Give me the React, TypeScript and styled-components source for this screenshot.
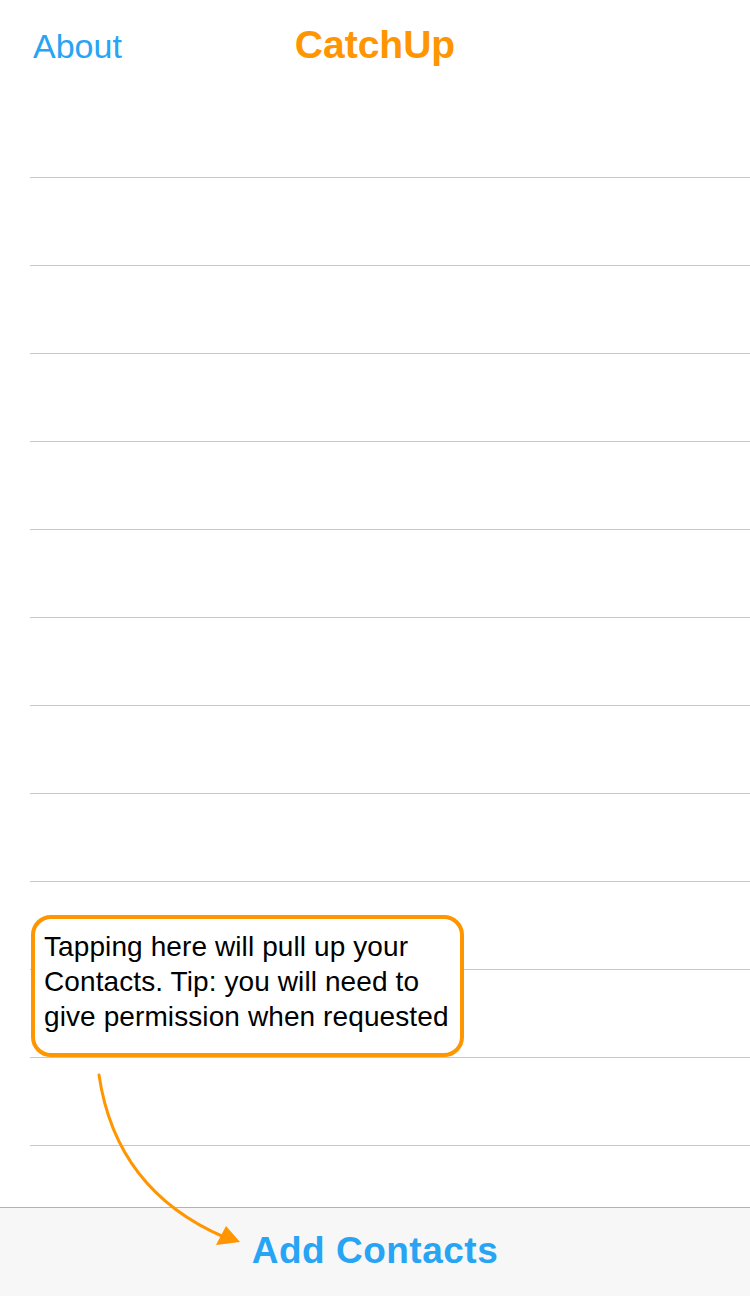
import React from 'react'
import styled, {createGlobalStyle} from 'styled-components'

const ROWS = 13

function App() {
    return (
        <>
            <GlobalStyle/>
            <Screen>
                <NavBar>
                    <NavButton>About</NavButton>
                    <Title>CatchUp</Title>
                    <span/>
                </NavBar>
                <List>
                    {Array.from({length: ROWS}).map((_, i) => (
                        <Row key={i}/>
                    ))}
                </List>
                <TipBox>
                    Tapping here will pull up your Contacts. Tip: you will need to give permission when requested
                </TipBox>
                <Arrow width="750" height="1296" viewBox="0 0 750 1296">
                    <path d="M99 1075 C 110 1150, 150 1205, 224 1237" fill="none" stroke="#ff9500" strokeWidth="3" strokeLinecap="round"/>
                    <polygon points="240,1242 216,1245 226,1226" fill="#ff9500"/>
                </Arrow>
                <Toolbar>
                    <AddButton>Add Contacts</AddButton>
                </Toolbar>
            </Screen>
        </>
    )
}

const GlobalStyle = createGlobalStyle`
  html, body {
    margin: 0;
    padding: 0;
    background: #fff;
  }
  body {
    font-family: 'Liberation Sans', Arial, sans-serif;
  }
`

const Screen = styled.div`
  position: relative;
  display: flex;
  flex-direction: column;
  width: 750px;
  height: 1296px;
  overflow: hidden;
  background: #fff;
`

const NavBar = styled.header`
  box-sizing: border-box;
  height: 90px;
  padding-top: 25px;
  display: grid;
  grid-template-columns: 1fr auto 1fr;
  align-items: baseline;
  flex-shrink: 0;
`

const NavButton = styled.span`
  padding-left: 33px;
  font-size: 34px;
  line-height: 1;
  color: #27a4f4;
`

const Title = styled.h1`
  margin: 0;
  font-size: 39px;
  line-height: 1;
  font-weight: bold;
  color: #ff9500;
`

const List = styled.div`
  flex: 1;
  overflow: hidden;
`

const Row = styled.div`
  box-sizing: border-box;
  height: 88px;
  margin-left: 30px;
  border-bottom: 1px solid #c8c7cc;
`

// hint bubble floats over the table rows
const TipBox = styled.div`
  position: absolute;
  left: 31px;
  top: 915px;
  box-sizing: border-box;
  width: 433px;
  height: 142px;
  padding: 10px 8px 0 9px;
  border: 4px solid #ff9500;
  border-radius: 20px;
  background: #fff;
  font-size: 28px;
  line-height: 35px;
  letter-spacing: 0.1px;
  color: #000;
`

const Arrow = styled.svg`
  position: absolute;
  left: 0;
  top: 0;
  pointer-events: none;
  z-index: 2;
`

const Toolbar = styled.footer`
  box-sizing: border-box;
  height: 89px;
  flex-shrink: 0;
  display: flex;
  align-items: center;
  justify-content: center;
  background: #f7f7f7;
  border-top: 1px solid #b2b2b2;
`

const AddButton = styled.span`
  font-size: 37px;
  font-weight: bold;
  letter-spacing: 0.5px;
  color: #27a4f4;
  margin-top: -2px;
`

export default App
